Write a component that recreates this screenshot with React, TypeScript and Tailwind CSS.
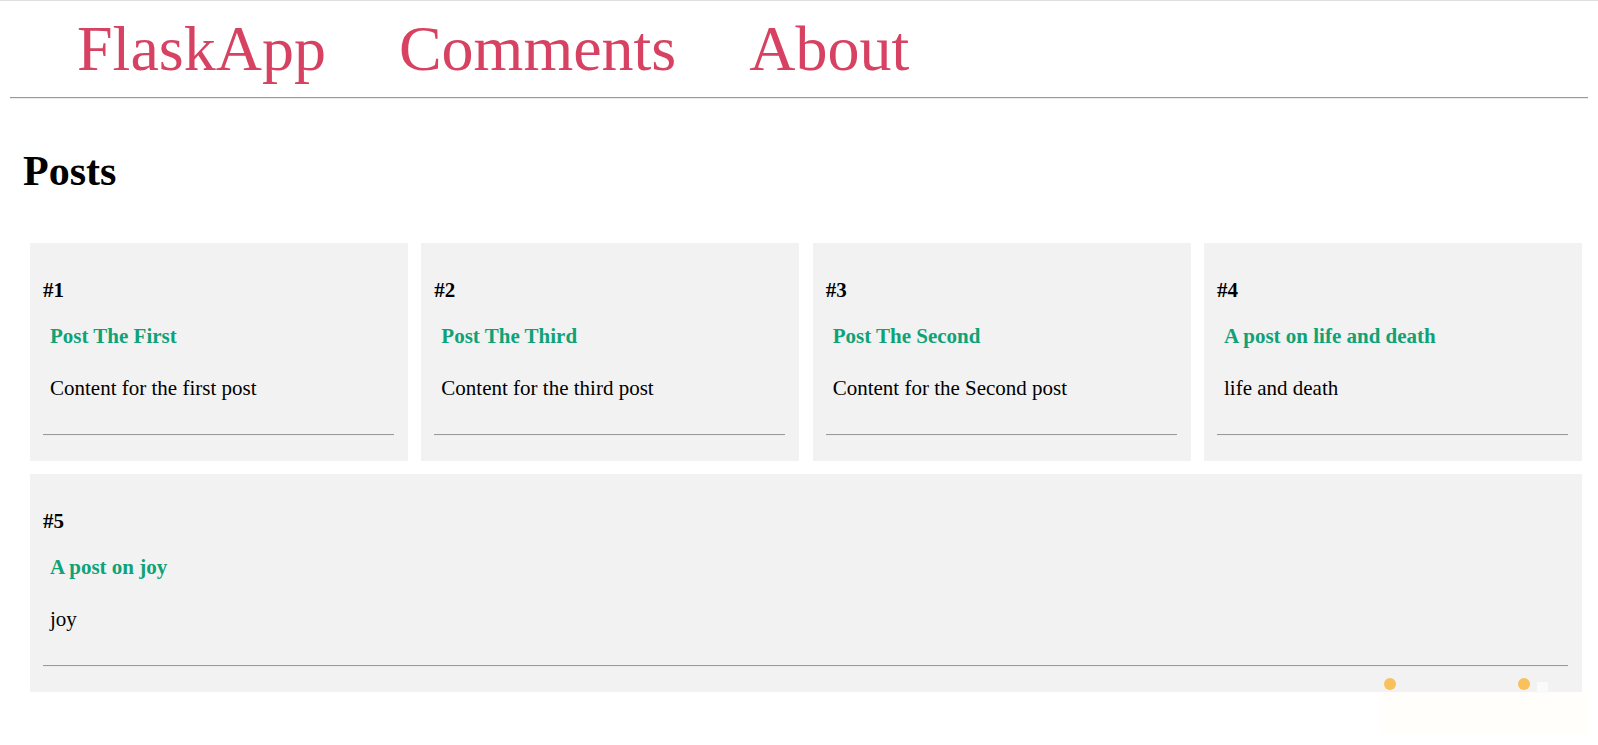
const posts = [
  { id: 1, title: "Post The First", content: "Content for the first post" },
  { id: 2, title: "Post The Third", content: "Content for the third post" },
  { id: 3, title: "Post The Second", content: "Content for the Second post" },
  { id: 4, title: "A post on life and death", content: "life and death" },
  { id: 5, title: "A post on joy", content: "joy" },
];

function Rule({ className = "" }: { className?: string }) {
  return <hr className={`h-0 border-t border-b border-t-[#9a9a9a] border-b-[#ececec] ${className}`} />;
}

function PostCard({ id, title, content, wide }: { id: number; title: string; content: string; wide?: boolean }) {
  return (
    <div className={`flex flex-col bg-[#f2f2f2] pt-[36px] pb-[25px] pl-[13px] pr-[14px] ${wide ? "col-span-4" : ""}`}>
      <h4 className="text-[21px] font-bold leading-[23px]">#{id}</h4>
      {/* Title */}
      <h3 className="mt-[23px] pl-[7px] text-[21px] font-bold leading-[23px] text-[#0fa277]">{title}</h3>
      <p className="mt-[29px] pl-[7px] text-[21px] leading-[23px]">{content}</p>
      <Rule className="mt-[34px]" />
    </div>
  );
}

export default function App() {
  return (
    <div
      className="relative min-h-[745px] bg-white text-black border-t border-[#dedede]"
      style={{ fontFamily: '"Liberation Serif", "Times New Roman", serif' }}
    >
      {/* Nav */}
      <nav className="flex gap-[73px] pl-[77px] pt-[11px] text-[64px] leading-[74px] text-[#d74262]">
        <a href="#">FlaskApp</a>
        <a href="#">Comments</a>
        <a href="#">About</a>
      </nav>
      <Rule className="mx-[10px] mt-[11px]" />

      <h1 className="mt-[48px] pl-[23px] text-[42px] font-bold leading-[48px]">Posts</h1>

      <div className="mt-[48px] grid grid-cols-4 gap-[13.33px] pl-[30px] pr-[16px]">
        {posts.map((p) => (
          <PostCard key={p.id} {...p} wide={p.id === 5} />
        ))}
      </div>

      {/* corner overlay */}
      <div className="absolute left-[1380px] top-[691px] h-[42px] w-[207px] bg-[#fffefb]" />
      <div className="absolute left-[1537px] top-[681px] h-[11px] w-[11px] bg-[#fafafa]" />
      <div className="absolute left-[1384px] top-[677px] h-[12px] w-[12px] rounded-full bg-[#f9c15c]" />
      <div className="absolute left-[1518px] top-[677px] h-[12px] w-[12px] rounded-full bg-[#f9c15c]" />
    </div>
  );
}
